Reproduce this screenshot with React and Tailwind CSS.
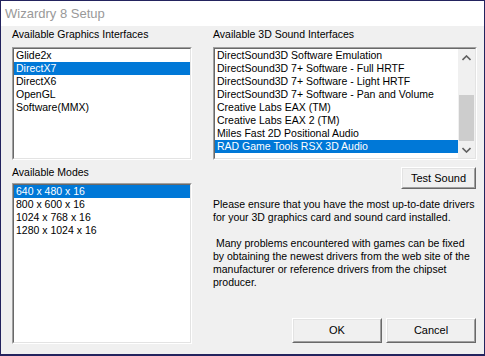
import React from "react";

const sounds = [
  "DirectSound3D Software Emulation",
  "DirectSound3D 7+ Software - Full HRTF",
  "DirectSound3D 7+ Software - Light HRTF",
  "DirectSound3D 7+ Software - Pan and Volume",
  "Creative Labs EAX (TM)",
  "Creative Labs EAX 2 (TM)",
  "Miles Fast 2D Positional Audio",
  "RAD Game Tools RSX 3D Audio",
];

const graphics = ["Glide2x", "DirectX7", "DirectX6", "OpenGL", "Software(MMX)"];
const modes = ["640 x 480 x 16", "800 x 600 x 16", "1024 x 768 x 16", "1280 x 1024 x 16"];

// classic sunken listbox frame
const Sunken = ({ className, children }) => (
  <div className={`border border-t-[#a0a0a0] border-l-[#a0a0a0] border-b-white border-r-white ${className}`}>
    <div className="h-full border border-t-[#696969] border-l-[#696969] border-b-[#e3e3e3] border-r-[#e3e3e3] bg-white">
      {children}
    </div>
  </div>
);

const Row = ({ text, selected }) => (
  <div
    className={`h-[13px] leading-[13px] pl-[2px] whitespace-nowrap ${
      selected ? "bg-[#0078d7] text-white" : "text-black"
    }`}
  >
    {text}
  </div>
);

const Button = ({ children, className }) => (
  <button
    className={`border border-t-white border-l-white border-b-[#696969] border-r-[#696969] bg-[#f0f0f0] p-0 ${className}`}
  >
    <div className="h-full flex items-center justify-center border border-t-[#e3e3e3] border-l-[#e3e3e3] border-b-[#a0a0a0] border-r-[#a0a0a0] text-black">
      {children}
    </div>
  </button>
);

const Chevron = ({ up }) => (
  <svg width="9" height="6" viewBox="0 0 9 6">
    <path
      d={up ? "M0.5 5 L4.5 1 L8.5 5" : "M0.5 1 L4.5 5 L8.5 1"}
      fill="none"
      stroke="#606060"
      strokeWidth="1.6"
    />
  </svg>
);

const App = () => {
  return (
    <div
      className="w-[485px] h-[356px] flex flex-col bg-[#f0f0f0] border border-[#23235e] border-b-2 text-[10.5px] overflow-hidden"
      style={{ fontFamily: '"Liberation Sans", Arial, sans-serif' }}
    >
      <div className="h-[25px] bg-white flex items-center pl-[4px] text-[13px] text-[#999999]">
        Wizardry 8 Setup
      </div>

      <div className="flex pl-[11px] pt-[2px]">
        {/* left column */}
        <div className="w-[180px] flex flex-col">
          <div className="h-[13px] leading-[13px]">Available Graphics Interfaces</div>
          <Sunken className="mt-[6px] h-[113px]">
            {graphics.map((g) => (
              <Row key={g} text={g} selected={g === "DirectX7"} />
            ))}
          </Sunken>
          <div className="mt-[6px] h-[13px] leading-[13px]">Available Modes</div>
          <Sunken className="mt-[4px] h-[161px]">
            {modes.map((m, i) => (
              <Row key={m} text={m} selected={i === 0} />
            ))}
          </Sunken>
        </div>

        {/* right column */}
        <div className="w-[264px] ml-[21px] flex flex-col">
          <div className="h-[13px] leading-[13px]">Available 3D Sound Interfaces</div>
          <Sunken className="mt-[6px] h-[113px]">
            <div className="flex h-full">
              <div className="flex-1 min-w-0">
                {sounds.map((s, i) => (
                  <Row key={s} text={s} selected={i === 7} />
                ))}
              </div>
              <div className="w-[17px] bg-[#f0f0f0] flex flex-col">
                <div className="h-[17px] flex items-center justify-center">
                  <Chevron up />
                </div>
                <div className="h-[29px]" />
                <div className="h-[46px] bg-[#cdcdcd] mx-[1px]" />
                <div className="h-[17px] flex items-center justify-center">
                  <Chevron />
                </div>
              </div>
            </div>
          </Sunken>

          <div className="flex justify-end mt-[7px] pr-[1px]">
            <Button className="w-[75px] h-[22px] text-[11px]">Test Sound</Button>
          </div>

          <div className="mt-[9px] leading-[13px] whitespace-pre text-black">
            {"Please ensure that you have the most up-to-date drivers\nfor your 3D graphics card and sound card installed.\n\n Many problems encountered with games can be fixed\nby obtaining the newest drivers from the web site of the\nmanufacturer or reference drivers from the chipset\nproducer."}
          </div>

          <div className="flex justify-end gap-[4px] mt-[29px] pr-[1px]">
            <Button className="w-[90px] h-[25px] text-[11px]">OK</Button>
            <Button className="w-[90px] h-[25px] text-[11px]">Cancel</Button>
          </div>
        </div>
      </div>
    </div>
  );
};

export default App;
